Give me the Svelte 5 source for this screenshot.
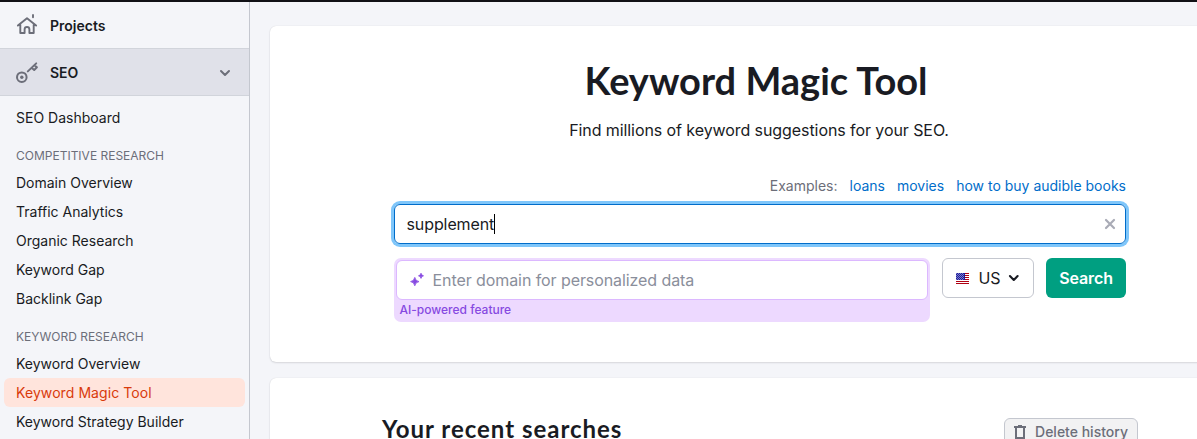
<script lang="ts">
  const groups: { label: string; items: string[] }[] = [
    {
      label: "Competitive research",
      items: ["Domain Overview", "Traffic Analytics", "Organic Research", "Keyword Gap", "Backlink Gap"],
    },
    {
      label: "Keyword research",
      items: ["Keyword Overview", "Keyword Magic Tool", "Keyword Strategy Builder"],
    },
  ];
  const examples: string[] = ["loans", "movies", "how to buy audible books"];

  let active = $state("Keyword Magic Tool");
  let query = $state("supplement");
</script>

<div class="page">
  <nav class="sidebar">
    <div class="section">
      <svg class="section-icon" width="24" height="24" viewBox="0 0 24 24" fill="none" stroke="#6c6e79" stroke-width="1.9" stroke-linecap="round" stroke-linejoin="round">
        <path d="M1.900 12.600 11 5.300l9.100 7.300M4.300 11.500v8.500h4.300v-3.600a2.400 2.400 0 0 1 4.800 0v3.600h4.300v-8.500" />
        <path d="M17 2v2.200" />
      </svg>
      Projects
    </div>
    <div class="section open">
      <svg class="section-icon" width="24" height="24" viewBox="0 0 24 24" fill="none" stroke="#6c6e79" stroke-width="2" stroke-linecap="round" stroke-linejoin="round">
        <circle cx="5.800" cy="16.200" r="4.800" />
        <circle cx="5.800" cy="16.200" r="1.700" fill="#6c6e79" stroke="none" />
        <path d="M11.800 10.400 20.200 2.400M15.600 6.800l2.600 2.200 2.700-2.700-2.200-1.900" />
      </svg>
      SEO
      <svg class="section-arrow" width="12" height="8" viewBox="0 0 12 8" fill="none" stroke="#6c6e79" stroke-width="2" stroke-linecap="round" stroke-linejoin="round">
        <path d="m2 2 4 4 4-4" />
      </svg>
    </div>

    <div class="menu">
      <div class="item">SEO Dashboard</div>
      {#each groups as group}
        <div class="group-label">{group.label}</div>
        {#each group.items as item}
          <div class="item" class:active={item === active}>{item}</div>
        {/each}
      {/each}
    </div>
  </nav>

  <main class="content">
    <section class="card search-card">
      <h1>Keyword Magic Tool</h1>
      <p class="subtitle">Find millions of keyword suggestions for your SEO.</p>

      <div class="form">
        <div class="examples">
          <span>Examples:</span>
          {#each examples as example}
            <span class="link">{example}</span>
          {/each}
        </div>

        <div class="keyword-input">
          <span>{query}</span><span class="caret"></span>
          <svg class="clear" width="12" height="12" viewBox="0 0 12 12" stroke="#a9abb6" stroke-width="2.2" stroke-linecap="round">
            <path d="m2 2 8 8M10 2l-8 8" />
          </svg>
        </div>

        <div class="form-row">
          <div class="ai">
            <div class="ai-input">
              <svg width="16" height="16" viewBox="0 0 16 16" fill="#8649e1" stroke="#8649e1" stroke-width=".8" stroke-linejoin="round">
                <path d="M5.800 5.400Q6.400 9 10 9.600 6.400 10.200 5.800 13.800 5.200 10.200 1.600 9.600 5.200 9 5.800 5.400Z" />
                <path d="M12 1.200Q12.300 3.400 14.500 3.800 12.300 4.200 12 6.400 11.700 4.200 9.500 3.800 11.700 3.400 12 1.200Z" />
              </svg>
              Enter domain for personalized data
            </div>
            <div class="ai-note">AI-powered feature</div>
          </div>

          <button class="country">
            <svg width="14" height="11" viewBox="0 0 14 11" shape-rendering="crispEdges">
              <rect width="14" height="11" fill="#fff" />
              {#each [0, 2, 4, 6, 8, 10] as y}
                <rect {y} width="14" height="1" fill="#b00012" />
              {/each}
              <rect width="9" height="7" fill="#1c1c9c" />
              {#each [0, 1, 2, 3, 4, 5, 6] as y}
                {#each [0, 2, 4, 6] as x}
                  <rect x={x + (y % 2)} {y} width="1" height="1" fill="#7c7cc8" />
                {/each}
              {/each}
            </svg>
            <span class="country-code">US</span>
            <svg class="country-arrow" width="12" height="8" viewBox="0 0 12 8" fill="none" stroke="#191b23" stroke-width="2.2" stroke-linecap="round" stroke-linejoin="round">
              <path d="m2 2 4 4 4-4" />
            </svg>
          </button>
          <button class="submit">Search</button>
        </div>
      </div>
    </section>

    <section class="card recent">
      <h2>Your recent searches</h2>
      <button class="delete">
        <svg width="12" height="14" viewBox="0 0 12 14" fill="none" stroke="#6c6e79" stroke-width="2">
          <path d="M0 2h12M2 2v11h8V2" />
          <path d="M4 .5h4" stroke-width="1" />
        </svg>
        Delete history
      </button>
    </section>
  </main>
</div>

<style>
  :global(body) {
    overflow: hidden;
  }

  .page {
    display: flex;
    box-sizing: border-box;
    width: 1197px;
    height: 439px;
    border-top: 2px solid #111116;
    background: #f4f5f9;
    color: #191b23;
    font-family: Inter, "Liberation Sans", sans-serif;
    overflow: hidden;
  }

  .sidebar {
    box-sizing: border-box;
    flex: none;
    width: 250px;
    border-right: 1px solid #c4c7cf;
  }

  .section {
    display: flex;
    align-items: center;
    box-sizing: border-box;
    height: 46px;
    padding: 1px 18px 1px 16px;
    font-size: 14px;
    font-weight: 600;
  }

  .section.open {
    height: 48px;
    padding-top: 1px;
    padding-bottom: 0;
    background: #e0e1e9;
    border-top: 1px solid #d1d4db;
    border-bottom: 1px solid #d1d4db;
  }

  .section-icon {
    margin-right: 10px;
  }

  .section-arrow {
    margin-left: auto;
  }

  .menu {
    padding: 7px 4px 0;
  }

  .item {
    padding: 0 12px;
    border-radius: 6px;
    font-size: 14px;
    line-height: 29px;
    white-space: nowrap;
  }

  .item.active {
    background: #ffe4dc;
    color: #d93a0b;
    letter-spacing: 0.08px;
  }

  .group-label {
    padding: 12px 12px 0;
    color: #6c6e79;
    font-size: 12px;
    line-height: 24px;
    text-transform: uppercase;
  }

  .content {
    flex: none;
    width: 980px;
    padding: 24px 0 0 20px;
  }

  .card {
    box-sizing: border-box;
    background: #fff;
    border-radius: 6px;
    box-shadow: 0 0 1px rgba(25, 27, 35, 0.16), 0 1px 2px rgba(25, 27, 35, 0.12);
  }

  .search-card {
    height: 336px;
    margin-bottom: 16px;
    padding-top: 30px;
    text-align: center;
  }

  h1 {
    margin: 0;
    padding-right: 8px;
    font-family: Lato, sans-serif;
    font-size: 38px;
    font-weight: 700;
    line-height: 48px;
  }

  .subtitle {
    margin: 14px 0 0;
    padding-right: 2px;
    font-size: 16px;
    letter-spacing: -0.08px;
    line-height: 24px;
  }

  .form {
    width: 732px;
    margin: 34px auto 0;
    text-align: left;
  }

  .examples {
    display: flex;
    justify-content: flex-end;
    gap: 12px;
    margin-bottom: 8px;
    color: #6c6e79;
    font-size: 14px;
    line-height: 20px;
  }

  .link {
    color: #006dca;
  }

  .keyword-input {
    display: flex;
    align-items: center;
    box-sizing: border-box;
    height: 40px;
    padding: 0 9px 0 11.5px;
    border: 1px solid #006dca;
    border-radius: 6px;
    box-shadow: 0 0 0 3px #7fc6fa;
    font-size: 16px;
    letter-spacing: -0.1px;
  }

  .caret {
    width: 1px;
    height: 20px;
    margin-left: -0.5px;
    background: #000;
  }

  .clear {
    margin-left: auto;
  }

  .form-row {
    display: flex;
    align-items: flex-start;
    gap: 12px;
    margin-top: 14px;
  }

  .ai {
    box-sizing: border-box;
    width: 536px;
    height: 64px;
    padding: 2px;
    border-radius: 7px;
    background: #edd9ff;
  }

  .ai-input {
    display: flex;
    align-items: center;
    gap: 8px;
    box-sizing: border-box;
    height: 40px;
    padding: 0 11.5px;
    border: 1px solid #dcb8ff;
    border-radius: 6px;
    background: #fff;
    color: #8a8e9b;
    font-size: 16px;
    letter-spacing: -0.08px;
  }

  .ai-note {
    padding: 0 3.500px;
    color: #8649e1;
    font-size: 12px;
    font-weight: 500;
    line-height: 20px;
  }

  button {
    display: flex;
    align-items: center;
    box-sizing: border-box;
    border-radius: 6px;
    font-family: inherit;
    white-space: nowrap;
  }

  .country {
    width: 92px;
    height: 40px;
    padding: 0 13px;
    border: 1px solid #c4c7cf;
    background: #fff;
    color: #191b23;
    font-size: 16px;
  }

  .country-code {
    margin: 0 8px 0 9px;
    letter-spacing: -0.1px;
  }

  .submit {
    justify-content: center;
    width: 80px;
    height: 40px;
    padding: 0;
    border: 0;
    background: #009f81;
    color: #fff;
    font-size: 16px;
    font-weight: 600;
    letter-spacing: -0.1px;
  }

  .recent {
    display: flex;
    align-items: flex-start;
    justify-content: space-between;
    height: 120px;
    padding: 40px 112px 0;
  }

  h2 {
    margin: 0;
    font-family: Lato, sans-serif;
    font-size: 24px;
    font-weight: 700;
    letter-spacing: 0.98px;
    line-height: 22px;
  }

  .delete {
    justify-content: center;
    gap: 9px;
    width: 134px;
    height: 28px;
    padding: 0 0 1px;
    border: 1px solid #c4c7cf;
    background: #f2f2f3;
    color: #6c6e79;
    font-size: 14px;
    font-weight: 500;
  }
</style>
